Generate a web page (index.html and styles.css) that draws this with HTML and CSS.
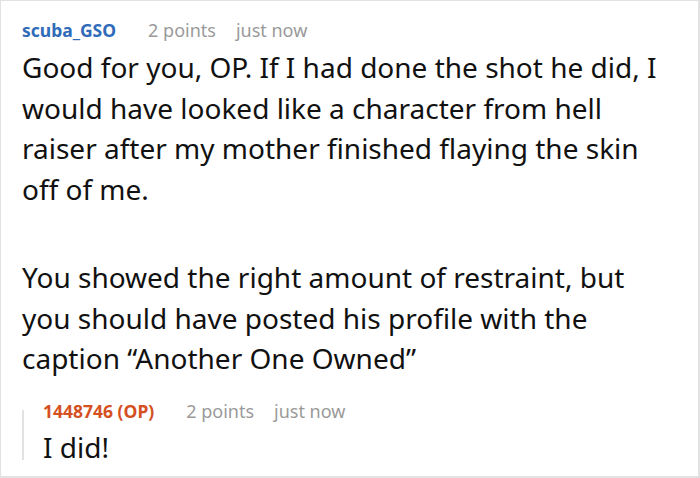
FILE: index.html
```html
<!DOCTYPE html>
<html>
<head>
<meta charset="utf-8">
<link rel="stylesheet" href="styles.css">
</head>
<body>
<div class="card">
  <div class="meta">
    <span class="user">scuba_GSO</span>
    <span class="info">2 points</span>
    <span class="info">just now</span>
  </div>
  <div class="text">
    <p>Good for you, OP. If I had done the shot he did, I would have looked like a character from hell raiser after my mother finished flaying the skin off of me.</p>
    <p>You showed the right amount of restraint, but you should have posted his profile with the caption “Another One Owned”</p>
  </div>
  <div class="reply">
    <div class="meta">
      <span class="user op">1448746 (OP)</span>
      <span class="info">2 points</span>
      <span class="info">just now</span>
    </div>
    <div class="reply-text">I did!</div>
  </div>
</div>
</body>
</html>
```

FILE: styles.css
```css
html, body {
  margin: 0;
  padding: 0;
  background: #fff;
}
body {
  font-family: "Noto Sans", "Open Sans", sans-serif;
  color: #111;
}
.card {
  width: 700px;
  height: 478px;
  box-sizing: border-box;
  border: 1px solid #e2e2e2;
  border-bottom-width: 2px;
  border-right-width: 2px;
  padding: 17px 0 0 21px;
  overflow: hidden;
}
.meta {
  display: flex;
  gap: 20px;
  align-items: baseline;
  font-size: 17.5px;
  line-height: 24px;
}
.user {
  font-weight: 700;
  color: #2f6bb8;
  margin-right: 12px;
}
.info {
  color: #9a9a9a;
  font-size: 18px;
}
.text {
  margin-top: 5.2px;
  font-size: 28px;
  line-height: 40.5px;
  width: 650px;
}
.text p {
  margin: 0;
}
.text p + p {
  margin-top: 48px;
}
.reply {
  position: relative;
  margin-top: 20.3px;
  padding-left: 21px;
}
.reply::before {
  content: "";
  position: absolute;
  left: 0;
  top: 11px;
  height: 50px;
  width: 2px;
  background: #e2e2e2;
}
.user.op {
  color: #d4501f;
}
.reply-text {
  margin-top: 4px;
  font-size: 28px;
  line-height: 41px;
}
```
